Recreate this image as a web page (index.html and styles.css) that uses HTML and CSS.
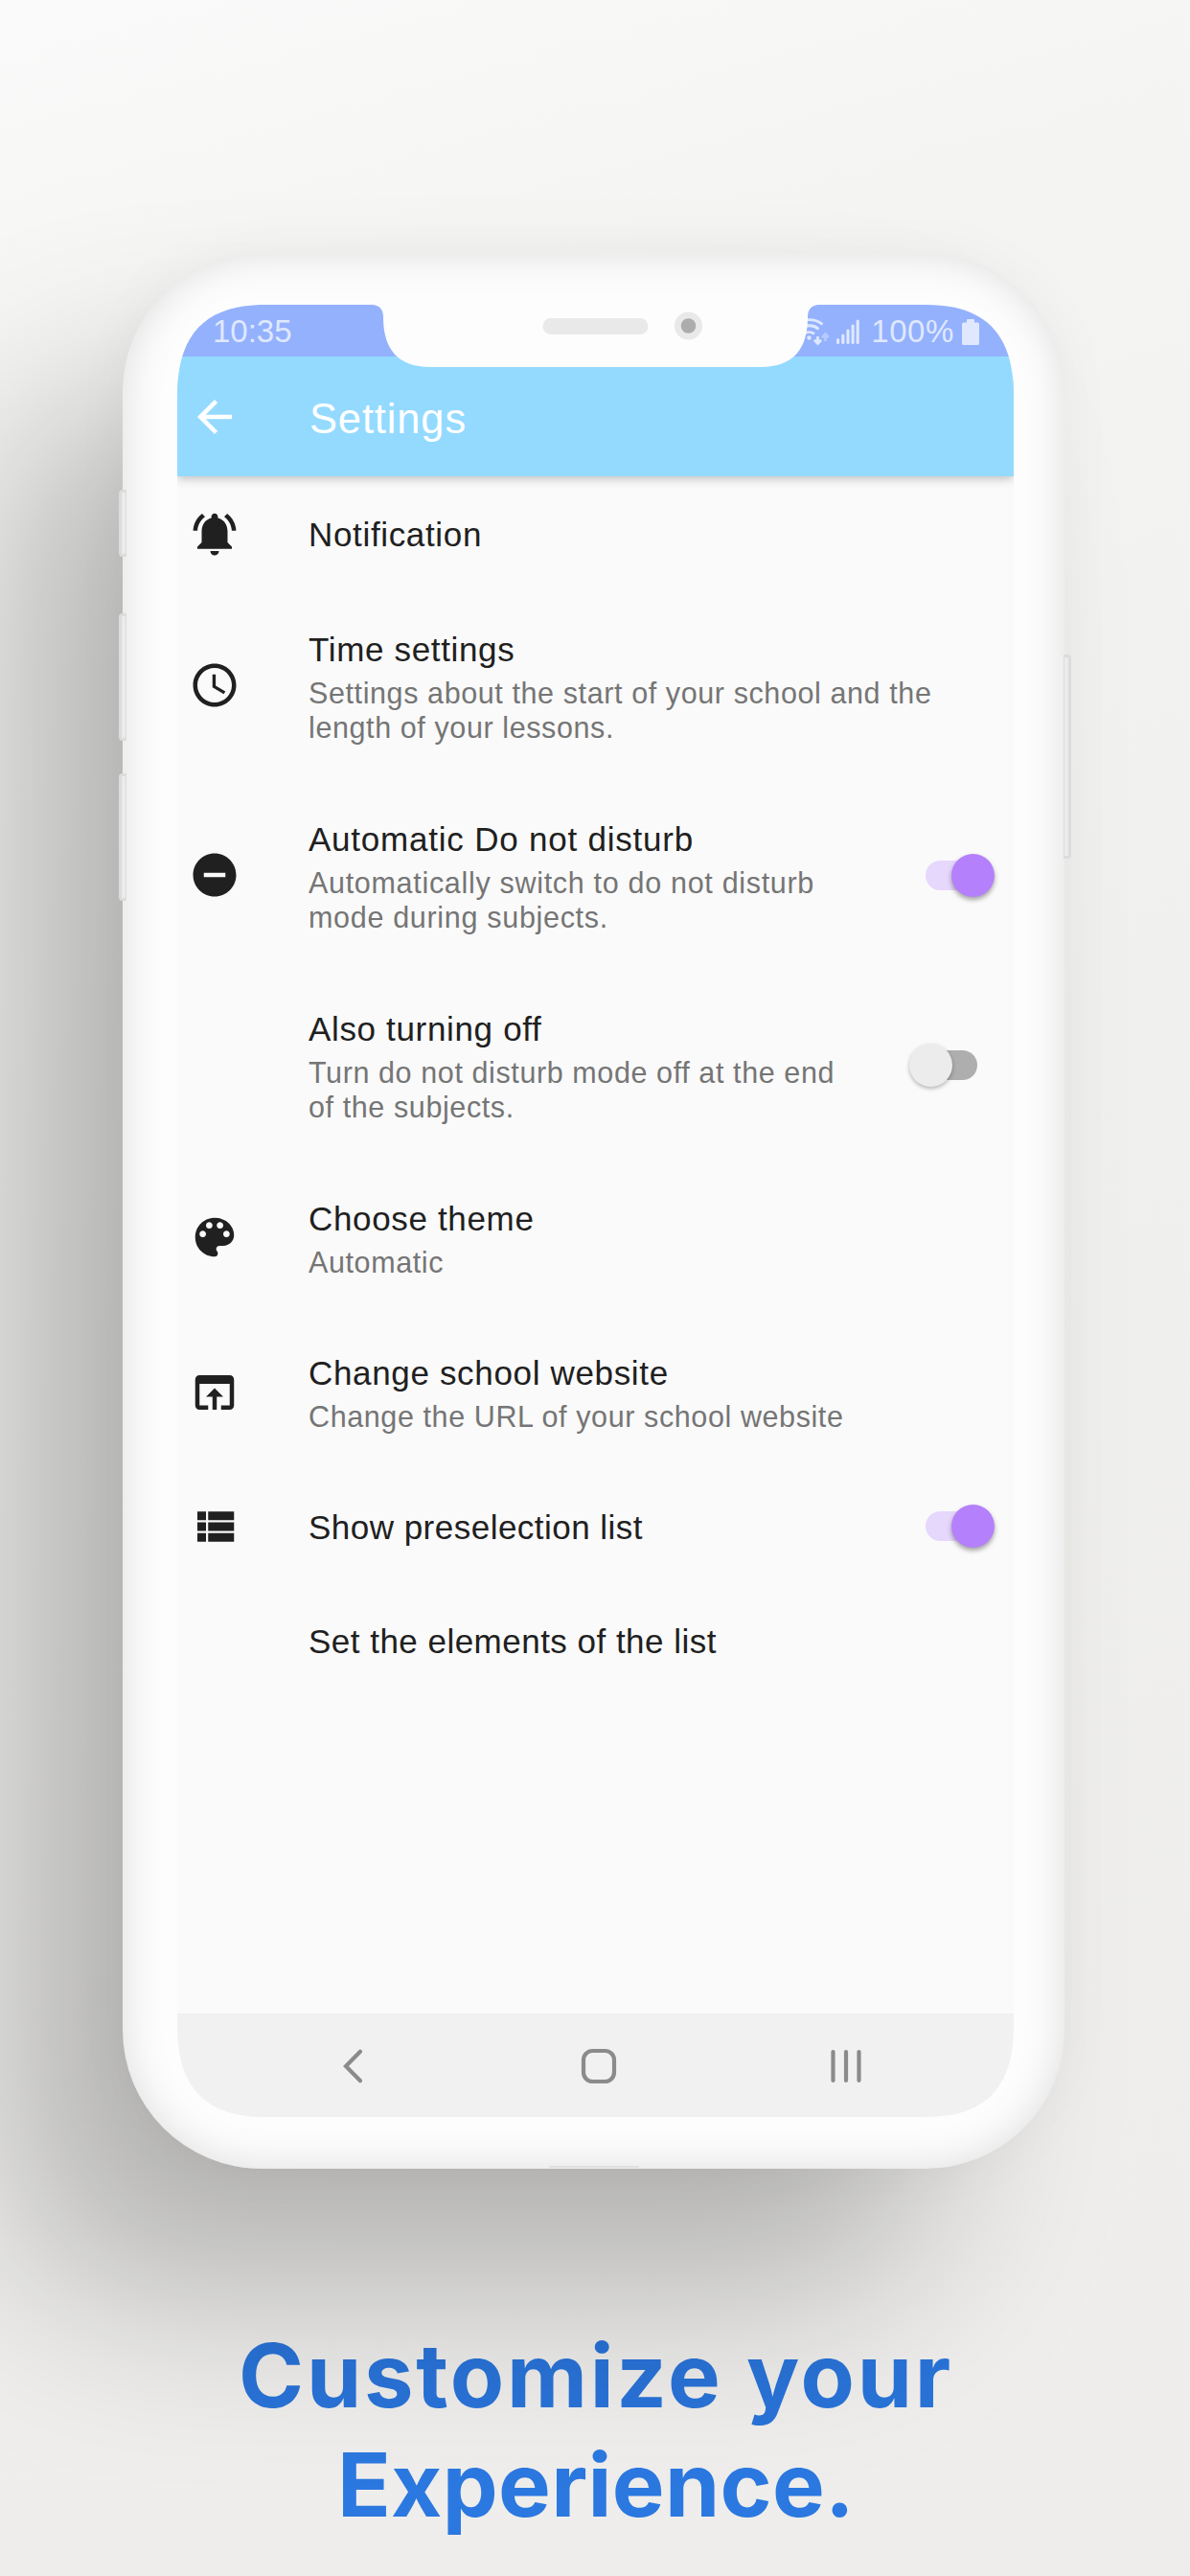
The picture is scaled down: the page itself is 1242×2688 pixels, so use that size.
FILE: index.html
```html
<!DOCTYPE html>
<html lang="en">
<head>
<meta charset="utf-8">
<title>Customize your Experience</title>
<link rel="stylesheet" href="styles.css">
</head>
<body>
<main class="poster">
  <section class="phone">
    <i class="key key-mute"></i><i class="key key-up"></i><i class="key key-down"></i><i class="key key-power"></i><i class="port"></i>
    <div class="screen">
      <div class="status">
        <span class="clock">10:35</span>
        <span class="tray">
          <svg class="wifi" width="32" height="30" viewBox="0 0 32 30">
            <g fill="none" stroke="currentColor" stroke-width="2.800">
              <path d="M0 6.500A21 21 0 0 1 25.500 7.500"/><path d="M3 12A14 14 0 0 1 21.500 12.500"/><path d="M6 17.500A9 9 0 0 1 17 17.500"/>
              <path d="M20.500 20v7M17 23.800l3.500 3.600 3.500-3.600"/>
              <path opacity=".45" d="M28.500 25v-7M25 21.200l3.500-3.600 3.500 3.600"/>
            </g>
            <circle cx="11.500" cy="21.500" r="2.200" fill="currentColor"/>
          </svg>
          <svg class="signal" width="24" height="26" viewBox="0 0 24 26" stroke="currentColor" stroke-width="3.100" stroke-linecap="round"><path d="M1.600 21.500v3M6.800 17v7.500M12 12v12.500M17.100 7v17.500M22.200 2v22.500"/></svg>
          <span class="charge">100%</span>
          <svg class="battery" width="18" height="27" viewBox="0 0 18 27" fill="currentColor"><path d="M6 0h6q1 0 1 1v2.500h3.500q1.500 0 1.500 1.500v20.500q0 1.500-1.500 1.500h-15Q0 27 0 25.500V5q0-1.500 1.500-1.500H5V1q0-1 1-1z"/></svg>
        </span>
      </div>
      <header class="appbar">
        <svg class="icon" viewBox="0 0 24 24"><path d="M20 11H7.830l5.590-5.590L12 4l-8 8 8 8 1.410-1.410L7.830 13H20v-2z"/></svg>
        <h1>Settings</h1>
      </header>
      <ul class="list">
        <li class="row">
          <svg class="icon" viewBox="0 0 24 24"><path d="M7.580 4.080L6.150 2.650C3.750 4.480 2.170 7.300 2.030 10.500h2c.15-2.650 1.510-4.970 3.550-6.420zm12.390 6.420h2c-.15-3.200-1.730-6.020-4.120-7.850l-1.420 1.430c2.020 1.450 3.390 3.770 3.540 6.420zM18 11c0-3.070-1.640-5.640-4.500-6.320V4c0-.83-.67-1.500-1.500-1.500s-1.500.67-1.500 1.500v.68C7.630 5.360 6 7.920 6 11v5l-2 2v1h16v-1l-2-2v-5zm-6 11c.14 0 .27-.01.4-.04.65-.14 1.180-.58 1.440-1.180.1-.24.15-.5.15-.78h-4c.01 1.100.9 2 2.010 2z"/></svg>
          <div class="text"><h2>Notification</h2></div>
        </li>
        <li class="row">
          <svg class="icon" viewBox="0 0 24 24"><path d="M11.990 2C6.470 2 2 6.480 2 12s4.470 10 9.990 10C17.520 22 22 17.520 22 12S17.520 2 11.990 2zM12 20c-4.420 0-8-3.580-8-8s3.580-8 8-8 8 3.580 8 8-3.580 8-8 8zm.5-13H11v6l5.250 3.150.75-1.230-4.500-2.670z"/></svg>
          <div class="text"><h2>Time settings</h2><p>Settings about the start of your school and the<br>length of your lessons.</p></div>
        </li>
        <li class="row">
          <svg class="icon" viewBox="0 0 24 24"><path d="M12 2C6.480 2 2 6.480 2 12s4.480 10 10 10 10-4.480 10-10S17.520 2 12 2zm5 11H7v-2h10v2z"/></svg>
          <div class="text loose"><h2>Automatic Do not disturb</h2><p>Automatically switch to do not disturb<br>mode during subjects.</p></div>
          <span class="switch on"></span>
        </li>
        <li class="row">
          <span class="icon"></span>
          <div class="text"><h2>Also turning off</h2><p>Turn do not disturb mode off at the end<br>of the subjects.</p></div>
          <span class="switch off"></span>
        </li>
        <li class="row">
          <svg class="icon" viewBox="0 0 24 24"><path d="M12 3c-4.970 0-9 4.030-9 9s4.030 9 9 9c.83 0 1.500-.67 1.500-1.500 0-.39-.15-.74-.39-1.010-.23-.26-.38-.61-.38-.99 0-.83.67-1.500 1.500-1.500H16c2.760 0 5-2.240 5-5 0-4.420-4.030-8-9-8zm-5.500 9c-.83 0-1.500-.67-1.500-1.500S5.670 9 6.500 9 8 9.670 8 10.500 7.330 12 6.500 12zm3-4C8.670 8 8 7.330 8 6.500S8.670 5 9.500 5s1.500.67 1.500 1.500S10.330 8 9.500 8zm5 0c-.83 0-1.500-.67-1.500-1.500S13.670 5 14.500 5s1.500.67 1.500 1.500S15.330 8 14.500 8zm3 4c-.83 0-1.500-.67-1.500-1.500S16.670 9 17.500 9s1.500.67 1.500 1.500-.67 1.500-1.500 1.500z"/></svg>
          <div class="text"><h2>Choose theme</h2><p>Automatic</p></div>
        </li>
        <li class="row">
          <svg class="icon" viewBox="0 0 24 24"><path d="M19 4H5c-1.110 0-2 .9-2 2v12c0 1.100.89 2 2 2h4v-2H5V8h14v10h-4v2h4c1.100 0 2-.9 2-2V6c0-1.100-.89-2-2-2zm-7 6l-4 4h3v6h2v-6h3l-4-4z"/></svg>
          <div class="text"><h2>Change school website</h2><p>Change the URL of your school website</p></div>
        </li>
        <li class="row">
          <svg class="icon" viewBox="0 0 24 24"><path d="M4 14h4v-4H4v4zm0 5h4v-4H4v4zM4 9h4V5H4v4zm5 5h12v-4H9v4zm0 5h12v-4H9v4zM9 5v4h12V5H9z"/></svg>
          <div class="text tight"><h2>Show preselection list</h2></div>
          <span class="switch on"></span>
        </li>
        <li class="row">
          <span class="icon"></span>
          <div class="text tight"><h2>Set the elements of the list</h2></div>
        </li>
      </ul>
      <nav class="navbar">
        <svg width="36" height="38" viewBox="0 0 36 38"><path d="M27 3.700L12 19 27 34.300"/></svg>
        <svg width="38" height="38" viewBox="0 0 38 38"><rect x="3" y="3" width="32" height="32" rx="9.500"/></svg>
        <svg width="36" height="38" viewBox="0 0 36 38"><path d="M4.500 4v30M18 4v30M31.500 4v30"/></svg>
      </nav>
    </div>
    <svg class="notch" width="467" height="66" viewBox="0 0 467 66"><path d="M0 0C8 0 12 5 12 13C12 46 27 65 61 65H406C440 65 455 46 455 13C455 5 459 0 467 0z" fill="#fdfdfd"/><rect x="178.500" y="14" width="110" height="17" rx="8.500" fill="#e9e9e9"/><circle cx="330.500" cy="22" r="14.600" fill="#e9e9e9"/><circle cx="330.500" cy="22" r="7.800" fill="#acacac"/></svg>
  </section>
  <p class="caption"><span class="line-a">Customize your</span><br><span class="line-b">Experience.</span></p>
</main>
</body>
</html>
```
FILE: styles.css
```css
* { box-sizing: border-box; margin: 0; padding: 0; }
body { font-family: "Liberation Sans", Arial, sans-serif; }
.poster {
  width: 1242px; height: 2688px; overflow: hidden;
  display: flex; flex-direction: column;
  padding: 264px 131px 0 128px;
  background: linear-gradient(165deg, #fafafa 0%, #f4f4f2 16%, #f0f0ee 45%, #eeedeb 100%);
}
.phone {
  position: relative; flex: none;
  height: 1999px; padding: 54px 53px 54px 57px;
  border-radius: 145px;
  background: #fdfdfd;
  box-shadow: inset 0 0 44px rgba(0,0,0,.13), -130px 138px 200px -14px rgba(0,0,0,.255), 0 0 60px rgba(0,0,0,.04);
}
.key { position: absolute; left: -4px; width: 8px; border: 3px solid #dcdcdc; border-right-width: 1px; background: #ebebeb; border-radius: 4px 0 0 4px; }
.key-mute { top: 247px; height: 70px; }
.key-up { top: 376px; height: 133px; }
.key-down { top: 543px; height: 133px; }
.key-power { left: auto; right: -7px; top: 419px; height: 213px; border-width: 3px 3px 3px 1px; border-radius: 0 4px 4px 0; }
.port { position: absolute; left: 445px; bottom: 1px; width: 94px; height: 2px; background: #dfdfdf; }
.screen {
  height: 1891px; display: flex; flex-direction: column;
  background: #fafafa;
  clip-path: path("M0 95C0 30 30 0 92 0H781C843 0 873 30 873 95V1796C873 1861 843 1891 781 1891H92C30 1891 0 1861 0 1796z");
}
.status {
  position: relative; z-index: 1;
  flex: none; height: 54px; padding: 2px 36px 0 37px;
  display: flex; align-items: center; justify-content: space-between;
  background: #94b1fd; color: #dfe8fe; font-size: 33px;
}
.tray { display: flex; align-items: center; }
.wifi { margin-right: 8px; }
.charge { margin: 0 8px 0 12px; letter-spacing: .6px; }
.appbar {
  flex: none; height: 125px; padding-left: 12px;
  display: flex; align-items: center; gap: 72px;
  position: relative;
  background: #94daff; color: #fff;
  box-shadow: 0 2px 10px rgba(0,0,0,.26);
}
.appbar h1 { font-size: 43.500px; font-weight: 400; letter-spacing: .85px; padding-top: 6px; }
.icon { flex: none; width: 54px; height: 54px; fill: currentColor; }
.list { flex: 1; list-style: none; color: #202020; }
.row { height: 119.300px; display: flex; align-items: center; padding: 0 20px 0 12px; }
.row:has(p) { height: 161.500px; }
.row:has(br) { height: 198px; }
.text { flex: 1; margin-left: 71px; padding-top: 2.500px; white-space: nowrap; }
.text h2 { font-size: 35px; line-height: 44px; font-weight: 400; letter-spacing: .66px; }
.text p { margin-top: 5px; font-size: 30.500px; line-height: 36.500px; letter-spacing: .6px; color: #757575; }
.loose h2 { letter-spacing: .78px; }
.loose p { letter-spacing: .69px; }
.tight h2 { letter-spacing: .48px; }
.switch { position: relative; flex: none; width: 60px; height: 31px; border-radius: 16px; background: #e6d7fc; margin-right: 12px; }
.switch::after { content: ""; position: absolute; top: -7px; right: -12px; width: 45px; height: 45px; border-radius: 50%; background: #b580fb; box-shadow: 0 3px 5px rgba(0,0,0,.35); }
.switch.off { margin-right: 18px; background: #aeaeae; }
.switch.off::after { right: auto; left: -11px; background: #ececec; box-shadow: 0 2px 4px rgba(0,0,0,.28); }
.navbar {
  flex: none; height: 108px; padding: 2px 157px 0 164px;
  display: flex; align-items: center; justify-content: space-between;
  background: #f1f1f1; fill: none; stroke: #8b8b8b; stroke-width: 4.200px; stroke-linecap: round;
}
.notch { position: absolute; left: 260px; top: 54px; }
.caption {
  margin-top: 159px; padding-left: 5px; text-align: center; white-space: nowrap;
  font: 700 92px/114px Inter, "Open Sans", sans-serif;
  color: #2b78e0;
}
.line-a { letter-spacing: 2.750px; color: #2973d8; }
.line-b { letter-spacing: .3px; }
```
